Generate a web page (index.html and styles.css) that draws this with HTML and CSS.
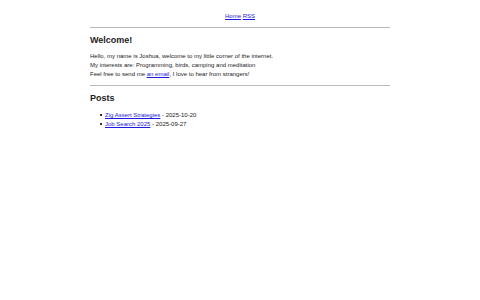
FILE: index.html
```html
<!DOCTYPE html>
<html lang="en">
<head>
    <meta charset="UTF-8">
    <title>Joshua</title>
    <link rel="stylesheet" href="styles.css">
</head>
<body>
    <div class="page">
        <nav class="nav">
            <a href="#">Home</a> <a href="#">RSS</a>
        </nav>
        <hr>
        <h2>Welcome!</h2>
        <p>
            Hello, my name is Joshua, welcome to my little corner of the internet.<br>
            My interests are: Programming, birds, camping and meditation<br>
            Feel free to send me <a href="#">an email</a>, I love to hear from strangers!
        </p>
        <hr>
        <h2>Posts</h2>
        <ul class="posts">
            <li><a href="#">Zig Assert Strategies</a> - 2025-10-20</li>
            <li><a href="#">Job Search 2025</a> - 2025-09-27</li>
        </ul>
    </div>
</body>
</html>
```

FILE: styles.css
```css
body {
    margin: 0;
    font-family: "Liberation Sans", Arial, sans-serif;
    font-size: 6px;
    line-height: 9px;
    color: #222;
    background: #fff;
}
.page {
    width: 300px;
    margin: 0 auto;
    padding-top: 12px;
}
a {
    color: #1a1ae0;
}
.nav {
    text-align: center;
}
hr {
    border: none;
    border-top: 1px solid #bbb;
    margin: 6px 0;
}
h2 {
    font-size: 9px;
    margin: 8px 0 7px;
}
p {
    margin: 0;
}
.posts {
    list-style: none;
    margin: 8px 0 0;
    padding-left: 10px;
}
.posts li::before {
    content: "";
    display: inline-block;
    width: 2px;
    height: 2px;
    margin-right: 3px;
    vertical-align: middle;
    background: #333;
}
```
